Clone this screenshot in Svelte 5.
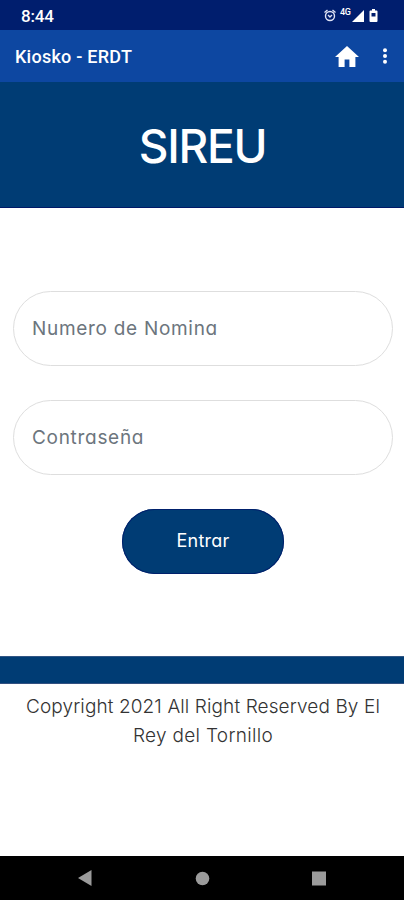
<script lang="ts">
  let employee = "";
  let password = "";
</script>

<div class="screen">
  <div class="status">
    <span class="clock">8:44</span>
    <div class="indicators">
      <svg class="alarm" viewBox="0 0 24 24" fill="none" stroke="#dfe3f5" stroke-width="2.8">
        <circle cx="12" cy="13" r="9" />
        <path d="M1 6l6-5M23 6l-6-5M8 11l4 4 4-4" />
      </svg>
      <span class="network">4G</span>
      <svg class="signal" viewBox="0 0 12 12"><path d="M12 0v12H0z" fill="#fff" /></svg>
      <svg class="battery" viewBox="0 0 9 13">
        <path fill="#fff" fill-rule="evenodd" d="M3 0h3v1.500h1.500Q8.500 1.500 8.500 2.500V12q0 1-1 1h-6q-1 0-1-1V2.500q0-1 1-1H3zM2.500 4v3.500h4V4z" />
      </svg>
    </div>
  </div>

  <header class="toolbar">
    <span class="app-name">Kiosko - ERDT</span>
    <button class="home" aria-label="Home">
      <svg viewBox="0 0 24 21"><path d="M9.600 21v-7.500h4.800V21h6V11H24L12 0 0 11h3.600v10z" fill="#fff" /></svg>
    </button>
    <button class="more" aria-label="Menu">
      <svg viewBox="0 0 6 16" fill="#fff">
        <circle cx="3" cy="2.300" r="2" />
        <circle cx="3" cy="8" r="2" />
        <circle cx="3" cy="13.700" r="2" />
      </svg>
    </button>
  </header>

  <div class="banner">
    <h1>SIREU</h1>
  </div>

  <form on:submit|preventDefault>
    <input class="employee" type="text" placeholder="Numero de Nomina" bind:value={employee} />
    <input class="password" type="password" placeholder="Contraseña" bind:value={password} />
    <button class="submit" type="submit">Entrar</button>
  </form>

  <div class="stripe"></div>

  <footer>
    <div class="line-one">Copyright 2021 All Right Reserved By El</div>
    <div class="line-two">Rey del Tornillo</div>
  </footer>

  <nav>
    <svg viewBox="0 0 16 16"><path d="M1 8L14.500 0v16z" fill="#9b9b9b" /></svg>
    <svg viewBox="0 0 16 16"><circle cx="8.500" cy="8.500" r="6.800" fill="#9b9b9b" /></svg>
    <svg viewBox="0 0 16 16"><rect x="1" y="1.500" width="14" height="14" fill="#9b9b9b" /></svg>
  </nav>
</div>

<style>
  :global(body) {
    margin: 0;
    background: #fff;
  }

  .screen {
    width: 404px;
    height: 900px;
    display: flex;
    flex-direction: column;
    overflow: hidden;
    background: #fff;
    font-family: Inter, "Open Sans", sans-serif;
    font-feature-settings: "cv11";
  }

  svg {
    display: block;
  }

  button {
    border: none;
    padding: 0;
    background: none;
    cursor: pointer;
  }

  .status {
    height: 30px;
    flex: none;
    box-sizing: border-box;
    padding: 1px 26px 0 21px;
    display: flex;
    align-items: center;
    justify-content: space-between;
    background: #001e6e;
    color: #fff;
    font-family: Roboto, sans-serif;
  }

  .clock {
    font-size: 17px;
    font-weight: 500;
    letter-spacing: -0.2px;
  }

  .indicators {
    display: flex;
    align-items: center;
  }

  .alarm {
    width: 12px;
    height: 13px;
  }

  .network {
    width: 11px;
    margin: -8px 1px 0 4px;
    font-size: 9px;
    line-height: 10px;
    font-weight: 500;
    letter-spacing: -0.3px;
  }

  .signal {
    width: 12px;
    height: 12px;
  }

  .battery {
    width: 9px;
    height: 13px;
    margin-left: 5px;
  }

  .toolbar {
    height: 52px;
    flex: none;
    box-sizing: border-box;
    padding: 0 16px 0 15px;
    display: flex;
    align-items: center;
    background: #0d47a1;
    color: #fff;
  }

  .app-name {
    flex: 1;
    margin-top: 1px;
    font-family: Roboto, sans-serif;
    font-size: 18px;
    font-weight: 500;
    letter-spacing: 0.25px;
  }

  .home svg {
    width: 24px;
    height: 21px;
  }

  .more {
    margin-left: 23px;
  }

  .more svg {
    width: 6px;
    height: 16px;
  }

  .banner {
    height: 126px;
    flex: none;
    display: flex;
    align-items: center;
    justify-content: center;
    background: #003c74;
    box-shadow: inset 0 -1px #001968;
  }

  h1 {
    margin: 0;
    padding: 1px 0 0 1px;
    color: #fff;
    font-size: 46px;
    line-height: 60px;
    font-weight: 500;
    letter-spacing: -1.3px;
  }

  form {
    height: 448px;
    flex: none;
    box-sizing: border-box;
    padding: 83px 11px 0 13px;
    display: flex;
    flex-direction: column;
    align-items: center;
  }

  input {
    width: 100%;
    height: 75px;
    box-sizing: border-box;
    margin: 0 0 34px;
    padding: 0 18px;
    border: 1px solid #dedede;
    border-radius: 38px;
    outline: none;
    background: #fff;
    color: #495057;
    font-family: inherit;
    font-feature-settings: inherit;
    font-size: 19px;
    letter-spacing: 0.7px;
  }

  input::placeholder {
    color: #6c757d;
    opacity: 1;
  }

  .submit {
    width: 162px;
    height: 65px;
    padding-bottom: 2px;
    border-radius: 33px;
    background: #003c74;
    box-shadow: inset 0 0 0 1px #00206c;
    color: #fff;
    font-family: inherit;
    font-feature-settings: inherit;
    font-size: 18px;
    letter-spacing: 0.25px;
  }

  .stripe {
    height: 28px;
    flex: none;
    box-sizing: border-box;
    background: #003c74;
    border-top: 1px solid #315584;
    border-bottom: 1px solid #335080;
  }

  footer {
    flex: 1;
    padding: 8px 0 0 2px;
    color: #333;
    font-size: 19px;
    font-weight: 300;
    line-height: 29px;
    letter-spacing: 0.11px;
    text-align: center;
    white-space: nowrap;
  }

  .line-two {
    letter-spacing: 0.3px;
  }

  nav {
    height: 44px;
    flex: none;
    box-sizing: border-box;
    padding: 0 77px;
    display: flex;
    align-items: center;
    justify-content: space-between;
    background: #000;
  }

  nav svg {
    width: 16px;
    height: 16px;
  }
</style>
